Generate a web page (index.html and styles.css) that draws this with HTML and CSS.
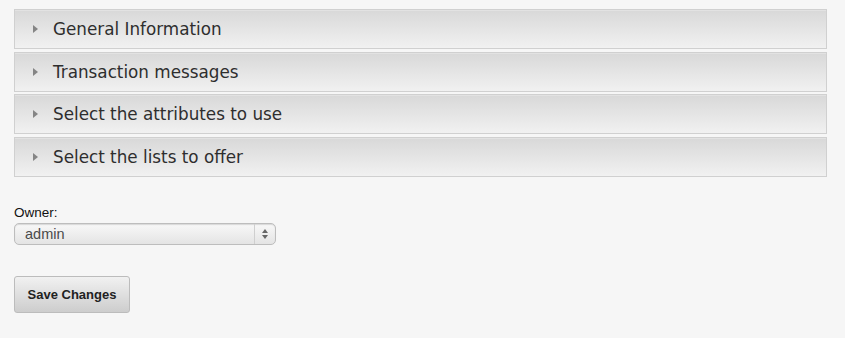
FILE: index.html
```html
<!DOCTYPE html>
<html>
<head>
<meta charset="utf-8">
<link rel="stylesheet" href="styles.css">
</head>
<body>
<div class="page">
  <div class="panels">
    <div class="panel"><span class="arrow"></span><span class="title">General Information</span></div>
    <div class="panel"><span class="arrow"></span><span class="title">Transaction messages</span></div>
    <div class="panel"><span class="arrow"></span><span class="title">Select the attributes to use</span></div>
    <div class="panel"><span class="arrow"></span><span class="title">Select the lists to offer</span></div>
  </div>
  <div class="field">
    <label class="label">Owner:</label>
    <div class="select">
      <span class="select-value">admin</span>
      <span class="select-btn">
        <svg width="8" height="12" viewBox="0 0 8 12"><path d="M4 1 L7 5 L1 5 Z" fill="#666"/><path d="M1 7 L7 7 L4 11 Z" fill="#666"/></svg>
      </span>
    </div>
  </div>
  <button class="save">Save Changes</button>
</div>
</body>
</html>
```
FILE: styles.css
```css
html, body {
  margin: 0;
  padding: 0;
  background: #f6f6f6;
}
.page {
  padding: 9px 18px 0 14px;
  font-family: "Liberation Sans", Arial, sans-serif;
}
.panels {
  display: flex;
  flex-direction: column;
  gap: 2.6px;
}
.panel {
  box-sizing: border-box;
  height: 40px;
  border: 1px solid #d0d0d0;
  background: linear-gradient(#d8d8d8, #f1f1f1);
  box-shadow: inset 0 1px 0 #e2e2e2;
  display: flex;
  align-items: center;
}
.arrow {
  width: 0;
  height: 0;
  border-top: 4px solid transparent;
  border-bottom: 4px solid transparent;
  border-left: 5px solid #858585;
  margin-left: 18px;
  margin-right: 15px;
}
.title {
  font-family: "DejaVu Sans", Verdana, sans-serif;
  font-size: 16.8px;
  color: #2e2e2e;
}
.field {
  margin-top: 28px;
  display: flex;
  flex-direction: column;
}
.label {
  font-size: 13.5px;
  color: #111;
  line-height: 15px;
  margin-bottom: 3px;
}
.select {
  box-sizing: border-box;
  width: 262px;
  height: 22px;
  border: 1px solid #bdbdbd;
  border-radius: 5px;
  background: linear-gradient(#f8f8f8, #e4e4e4);
  box-shadow: inset 0 1px 1px #d8d8d8;
  display: flex;
  align-items: center;
}
.select-value {
  flex: 1;
  padding-left: 10px;
  font-size: 14.5px;
  color: #4a4a4a;
}
.select-btn {
  width: 20px;
  height: 100%;
  border-left: 1px solid #cfcfcf;
  display: flex;
  align-items: center;
  justify-content: center;
}
.save {
  margin-top: 31px;
  box-sizing: border-box;
  width: 116px;
  height: 37px;
  border: 1px solid #bcbcbc;
  border-radius: 3px;
  background: linear-gradient(#f1f1f1, #cdcdcd);
  font-family: "Liberation Sans", Arial, sans-serif;
  font-weight: bold;
  font-size: 13px;
  color: #222;
  padding: 0;
}
```
